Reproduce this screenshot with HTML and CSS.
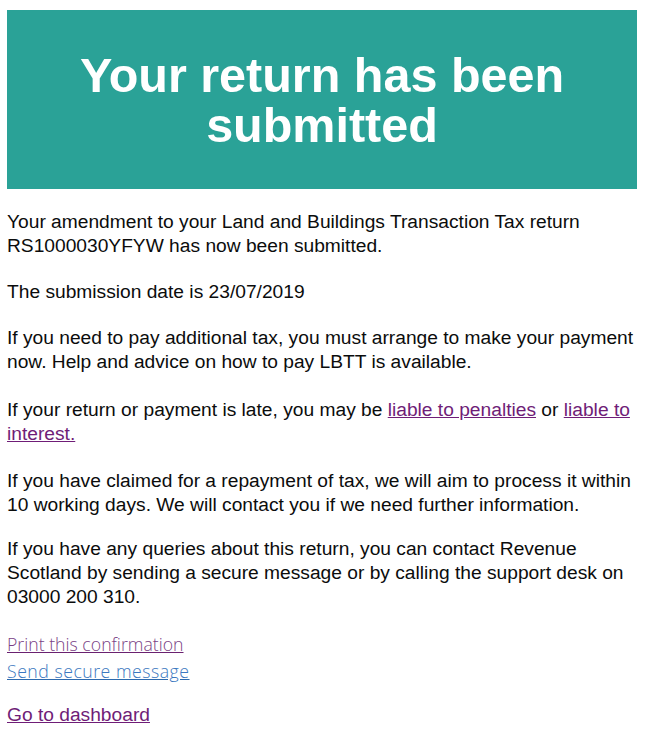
FILE: index.html
```html
<!DOCTYPE html>
<html lang="en">
<head>
<meta charset="utf-8">
<title>Your return has been submitted</title>
<link rel="stylesheet" href="styles.css">
</head>
<body>
<main class="page">
  <div class="panel">
    <h1 class="panel-title">Your return has been submitted</h1>
  </div>
  <div class="content">
    <p>Your amendment to your Land and Buildings Transaction Tax return RS1000030YFYW has now been submitted.</p>
    <p>The submission date is 23/07/2019</p>
    <p class="pay">If you need to pay additional tax, you must arrange to make your payment now. Help and advice on how to pay LBTT is available.</p>
    <p>If your return or payment is late, you may be <a class="link" href="#">liable to penalties</a> or <a class="link" href="#">liable to interest.</a></p>
    <p class="claimed">If you have claimed for a repayment of tax, we will aim to process it within 10 working days. We will contact you if we need further information.</p>
    <p>If you have any queries about this return, you can contact Revenue Scotland by sending a secure message or by calling the support desk on 03000 200 310.</p>
    <ul class="actions">
      <li><a class="action action-print" href="#">Print this confirmation</a></li>
      <li><a class="action action-message" href="#">Send secure message</a></li>
    </ul>
    <p class="dashboard"><a class="link" href="#">Go to dashboard</a></p>
  </div>
</main>
</body>
</html>
```

FILE: styles.css
```css
html, body {
  margin: 0;
  padding: 0;
  background: #ffffff;
}

.page {
  padding: 10px 8px 0 7px;
  font-family: "Liberation Sans", Arial, sans-serif;
  color: #0b0c0c;
}

.panel {
  background: #2aa297;
  padding: 40px 20px 39px;
  text-align: center;
}

.panel-title {
  margin: 0;
  color: #ffffff;
  font-size: 48.5px;
  line-height: 50px;
  font-weight: 700;
}

.content {
  padding-top: 21px;
  font-size: 19.2px;
  line-height: 24px;
}

.content p {
  margin: 0 0 22px;
}

.content .pay {
  margin-bottom: 24px;
}

.content .claimed {
  margin-top: 23px;
  margin-bottom: 20px;
}

.link {
  color: #6f1d77;
  text-decoration: underline;
}

.actions {
  list-style: none;
  margin: 0;
  padding: 0;
}

.actions li {
  line-height: 27px;
}

.action {
  font-family: "Open Sans", Lato, sans-serif;
  font-weight: 300;
  font-size: 17.7px;
  text-decoration: underline;
}

.action-print {
  color: #7a3f85;
  text-decoration-color: #6a2170;
}

.action-message {
  color: #3b78c0;
  text-decoration-color: #2d6aae;
  letter-spacing: 0.5px;
}

.content .dashboard {
  margin-top: 18px;
}
```
